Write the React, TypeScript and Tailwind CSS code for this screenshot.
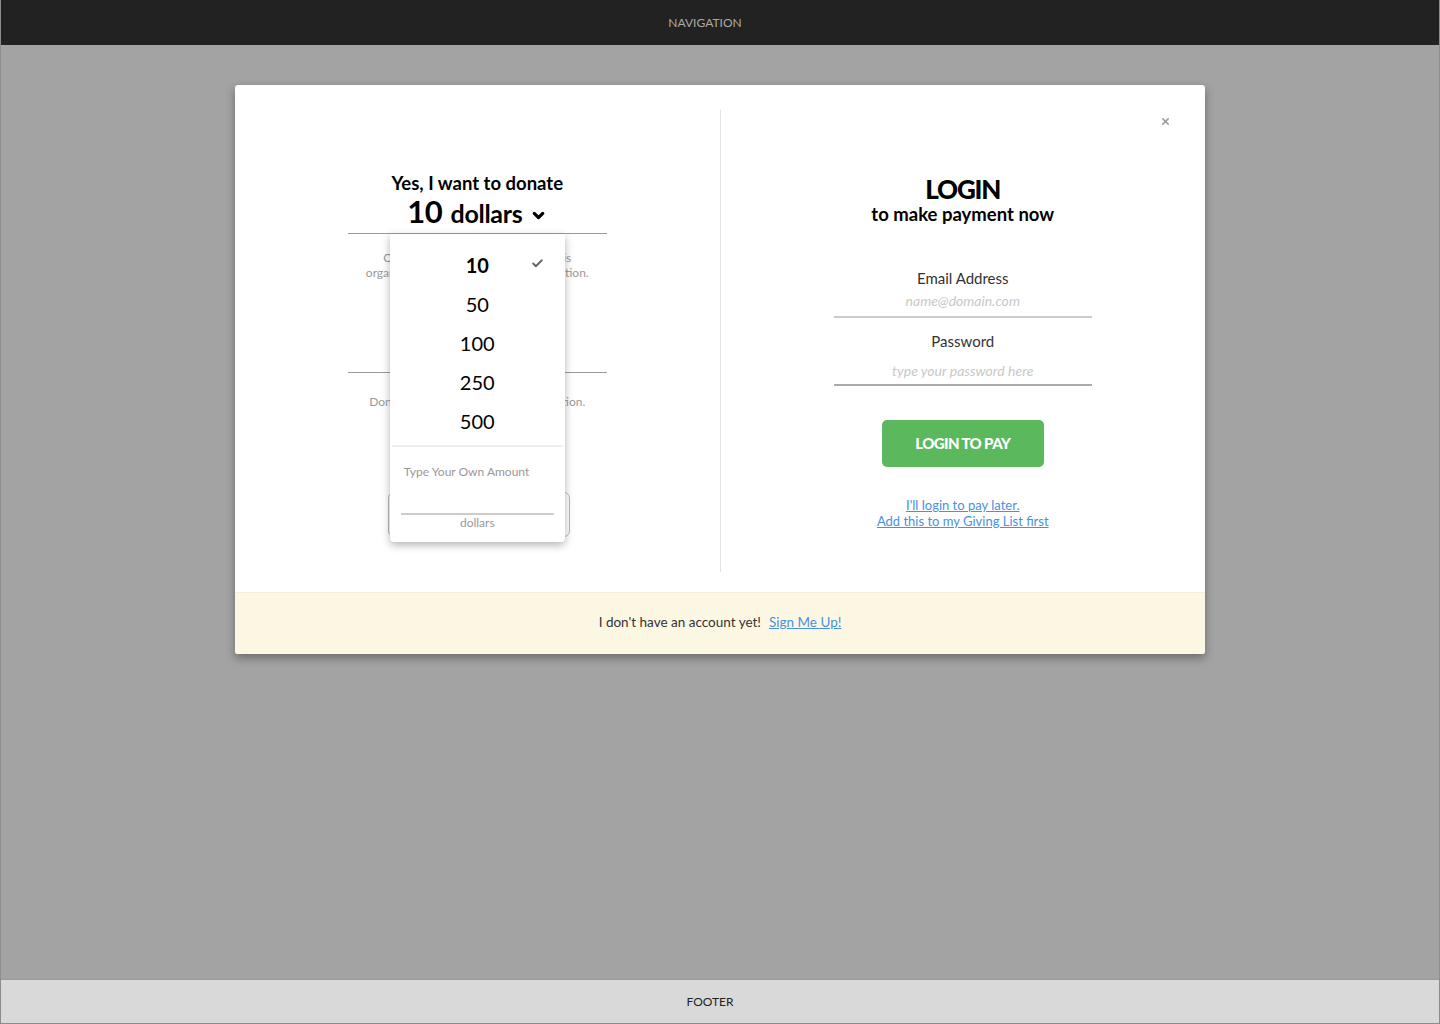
import { Check, ChevronDown, X } from "lucide-react";

const amounts = ["10", "50", "100", "250", "500"];

function AmountDropdown() {
    return (
        <div className="absolute left-[42px] top-0 w-[175px] bg-white rounded-b-[4px] shadow-[0_3px_8px_rgba(0,0,0,0.3)] z-10">
            <ul className="pt-[11px]">
                {amounts.map((a, i) => (
                    <li
                        key={a}
                        className={`relative h-[39px] flex items-center justify-center text-[20px] text-black ${
                            i === 0 ? "font-bold" : "font-normal"
                        }`}
                    >
                        {a}
                        {i === 0 && (
                            <Check size={13} strokeWidth={3.5} className="absolute right-[21px] top-[12px] text-[#666]" />
                        )}
                    </li>
                ))}
            </ul>
            <div className="mx-[2px] mt-[5px] border-t-2 border-[#eeeeee]" />
            <div className="px-[11px] pt-[16px] pb-[12px]">
                <p className="text-[12px] text-[#999] pl-[3px]">Type Your Own Amount</p>
                <div className="mt-[32px] border-t-2 border-[#cccccc]" />
                <p className="text-[12px] text-[#999] text-center leading-[14px] pt-[1px]">dollars</p>
            </div>
        </div>
    );
}

function DonateColumn() {
    return (
        <div className="flex-1 flex justify-center pt-[62px]">
            <div className="relative w-[259px]">
                <div className="text-center text-black">
                    <p className="text-[18.5px] font-bold leading-[22px]">Yes, I want to donate</p>
                    <button className="mt-[2px] inline-flex items-center gap-[8px] font-bold leading-[30px]">
                        <span className="tracking-[-0.3px]">
                            <span className="text-[31px] mr-[8px]">10</span>
                            <span className="text-[25px]">dollars</span>
                        </span>
                        <ChevronDown size={17} strokeWidth={4.5} className="mt-[2px]" />
                    </button>
                </div>
                <div className="relative mt-[1px] border-t border-[#999]">
                    <AmountDropdown />
                    <p className="mt-[16px] text-[12px] leading-[15px] text-[#999] text-center">
                        Our tax ID is #12-3456789 and this
                        <br />
                        organization is a registered US foundation.
                    </p>
                    <div className="mt-[92px] border-t border-[#999]" />
                    <p className="mt-[21px] text-[12px] leading-[15px] text-[#999] text-center">
                        Donations are sent to the US foundation.
                    </p>
                    <div className="mt-[83px] ml-[40px] w-[182px] h-[45px] border border-[#bbb] rounded-[6px]" />
                </div>
            </div>
        </div>
    );
}

function LoginColumn() {
    return (
        <div className="flex-1 flex flex-col items-center pt-[65px] text-center">
            <h2 className="text-[26px] font-black leading-[28px] tracking-[-1.2px] text-black">LOGIN</h2>
            <p className="text-[18.5px] font-bold leading-[22px] text-black">to make payment now</p>

            <div className="mt-[43px] w-[258px]">
                <label className="block text-[15px] text-[#333] leading-[20px]">Email Address</label>
                <input
                    placeholder="name@domain.com"
                    className="w-full text-center text-[14px] italic leading-[22px] pt-[1px] pb-[4px] border-b-2 border-[#cccccc] outline-none placeholder:text-[#c8c8c8]"
                />
                <label className="block mt-[13px] text-[15px] text-[#333] leading-[20px]">Password</label>
                <input
                    placeholder="type your password here"
                    className="w-full text-center text-[14px] italic leading-[22px] pt-[9px] pb-[2px] border-b-2 border-[#aaaaaa] outline-none placeholder:text-[#c8c8c8]"
                />
            </div>

            <button className="mt-[34px] w-[162px] h-[47px] rounded-[5px] bg-[#5cb85c] text-white text-[15px] font-black tracking-[-0.6px]">
                LOGIN TO PAY
            </button>

            <div className="mt-[30px] text-[13px] leading-[16px]">
                <a href="#" className="block text-[#4a90e2] underline">I'll login to pay later.</a>
                <a href="#" className="block text-[#4a90e2] underline">Add this to my Giving List first</a>
            </div>
        </div>
    );
}

export default function App() {
    return (
        <div
            className="h-[1024px] flex flex-col bg-[#a3a3a3] border-x border-b border-[#8c8c8c]"
            style={{ fontFamily: "Lato, 'Noto Sans', sans-serif" }}
        >
            <nav className="h-[45px] shrink-0 bg-[#222222] flex items-center justify-center">
                <span className="text-[12px] text-[#aaaaaa] ml-[-30px] pt-[1px]">NAVIGATION</span>
            </nav>

            <main className="flex-1 pt-[40px]">
                <div className="relative mx-auto w-[970px] bg-white rounded-[3px] shadow-[0_4px_10px_rgba(0,0,0,0.35)] overflow-hidden">
                    <button className="absolute right-[34px] top-[31px] text-[#999]">
                        <X size={11} strokeWidth={3.5} />
                    </button>
                    <div className="flex pt-[25px] pb-[20px]">
                        <DonateColumn />
                        <div className="w-px bg-[#e3e3e3] h-[462px]" />
                        <LoginColumn />
                    </div>
                    <div className="h-[62px] pb-[3px] bg-[#fcf7e3] border-t border-[#f5eedc] flex items-center justify-center gap-[8px] text-[13.5px]">
                        <span className="text-[#333]">I don't have an account yet!</span>
                        <a href="#" className="text-[#4a90e2] underline">Sign Me Up!</a>
                    </div>
                </div>
            </main>

            <footer className="h-[44px] shrink-0 bg-[#d9d9d9] border-t border-[#999] flex items-center justify-center">
                <span className="text-[12px] text-[#222] ml-[-20px]">FOOTER</span>
            </footer>
        </div>
    );
}
